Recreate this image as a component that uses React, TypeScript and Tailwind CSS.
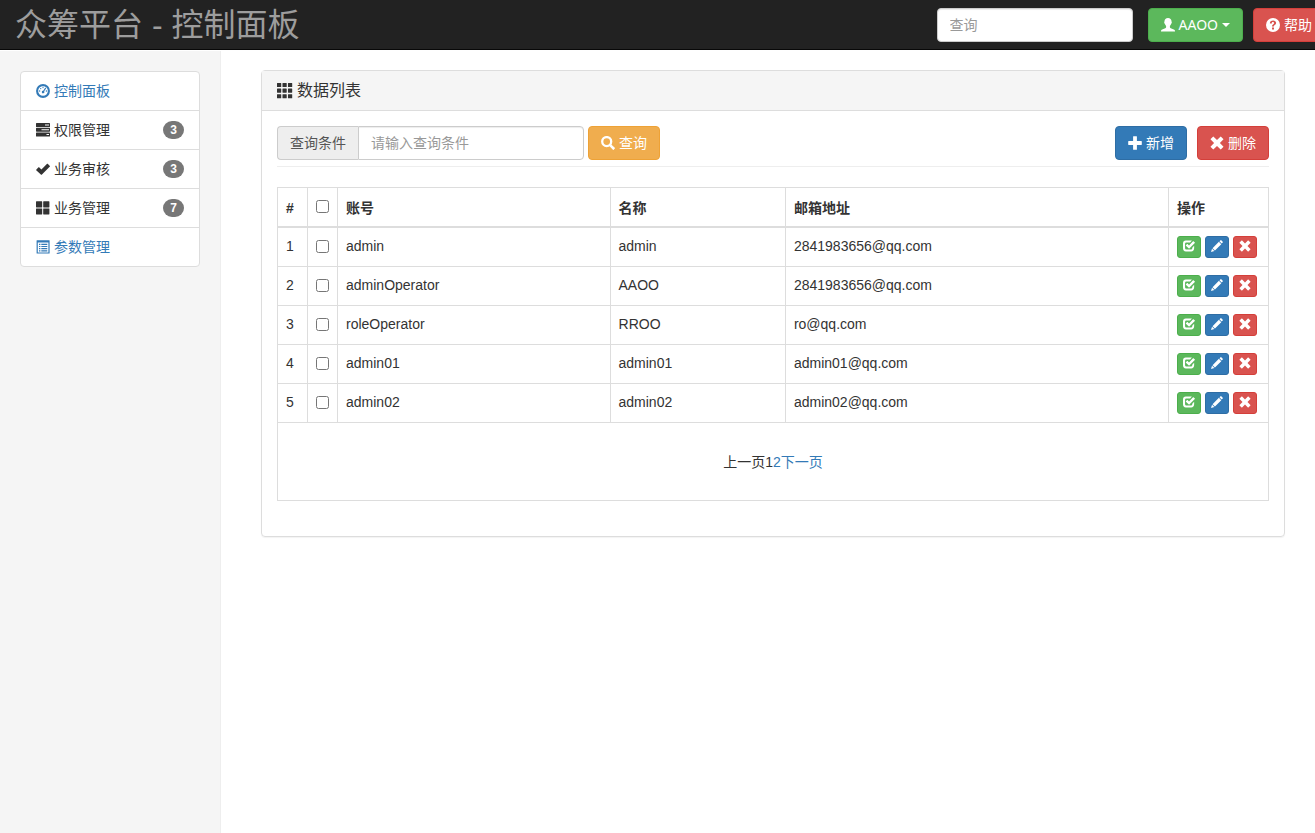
import { useState, type ReactNode } from 'react';
import clsx from 'clsx';

interface User {
  id: number;
  account: string;
  name: string;
  email: string;
}

interface MenuItem {
  label: string;
  icon: ReactNode;
  badge?: number;
}

interface IconProps {
  children: ReactNode;
  className?: string;
}

const users: User[] = [
  { id: 1, account: 'admin', name: 'admin', email: '2841983656@qq.com' },
  { id: 2, account: 'adminOperator', name: 'AAOO', email: '2841983656@qq.com' },
  { id: 3, account: 'roleOperator', name: 'RROO', email: 'ro@qq.com' },
  { id: 4, account: 'admin01', name: 'admin01', email: 'admin01@qq.com' },
  { id: 5, account: 'admin02', name: 'admin02', email: 'admin02@qq.com' },
];

function Icon({ children, className = 'size-3.5' }: IconProps) {
  return (
    <svg
      viewBox="0 0 14 14"
      fill="currentColor"
      aria-hidden="true"
      className={clsx('shrink-0', className)}
    >
      {children}
    </svg>
  );
}

const DashboardIcon = () => (
  <Icon>
    <circle cx="7" cy="7" r="5.9" fill="none" stroke="currentColor" strokeWidth="2.1" />
    <circle cx="3.6" cy="7" r="0.7" />
    <circle cx="4.7" cy="4.6" r="0.7" />
    <circle cx="7" cy="3.6" r="0.7" />
    <circle cx="10.4" cy="7" r="0.7" />
    <path d="M9.3 3.6l.9.6-2 3.1a1.3 1.3 0 1 1-1-.6z" />
  </Icon>
);

const TasksIcon = () => (
  <Icon>
    <path
      fillRule="evenodd"
      d="M.6 0h12.8q.6 0 .6.6v2.800q0 .6-.6.6H.6Q0 4 0 3.400V.6Q0 0 .6 0zM9 1.500v.9h4v-.9zM.6 4.800h12.8q.6 0 .6.6v2.700q0 .6-.6.6H.6Q0 8.700 0 8.100V5.400q0-.6.6-.6zM5.500 6.300v.9H13v-.9zM.6 9.500h12.8q.6 0 .6.6v2.800q0 .6-.6.6H.6q-.6 0-.6-.6v-2.800q0-.6.6-.6zM10.500 11v.9H13V11z"
    />
  </Icon>
);

const OkIcon = () => (
  <Icon>
    <path d="M.2 7.700l2.300-2.400q.3-.3.600 0L5.400 7.500l5.700-5.700q.3-.3.600 0l2.200 2.100q.3.300 0 .6l-8.200 8.200q-.3.300-.6 0L.2 8.300q-.3-.3 0-.6z" />
  </Icon>
);

const ThLargeIcon = () => (
  <Icon>
    <path d="M.4.300h5.400q.4 0 .4.400v5.300q0 .4-.4.400H.4Q0 6.400 0 6V.7Q0 .3.4.3zM7.600.3h5.400q.4 0 .4.4V6q0 .4-.4.4H7.600q-.4 0-.4-.4V.7q0-.4.4-.4zM.4 7.400h5.400q.4 0 .4.4v5.300q0 .4-.4.4H.4q-.4 0-.4-.4V7.800q0-.4.4-.4zM7.600 7.400h5.400q.4 0 .4.4v5.300q0 .4-.4.4H7.600q-.4 0-.4-.4V7.800q0-.4.4-.4z" />
  </Icon>
);

const ListAltIcon = () => (
  <Icon>
    <path
      fillRule="evenodd"
      d="M1 .2h12.200q.4 0 .4.400v12.600q0 .4-.4.4H1q-.4 0-.4-.4V.6Q.6.200 1 .2zM1.800 2.400v10.100h10.600V2.400z"
    />
    <path d="M3 3.700h1.400v1.200H3zM5.300 3.700h6v1.200h-6zM3 5.900h1.400v1.200H3zM5.300 5.900h6v1.200h-6zM3 8.100h1.400v1.200H3zM5.300 8.100h6v1.200h-6zM3 10.300h1.400v1.200H3zM5.300 10.300h6v1.200h-6z" />
  </Icon>
);

const ThIcon = () => (
  <Icon className="size-4">
    <path d="M.3 0h3.100q.3 0 .3.300v3q0 .3-.3.300H.3Q0 3.600 0 3.300v-3Q0 0 .3 0zM5.100 0h3.100q.3 0 .3.300v3q0 .3-.3.3H5.100q-.3 0-.3-.3v-3q0-.3.3-.3zM9.900 0H13q.3 0 .3.300v3q0 .3-.3.3H9.900q-.3 0-.3-.3v-3q0-.3.3-.3zM.3 4.900h3.100q.3 0 .3.300v3q0 .3-.3.3H.3q-.3 0-.3-.3v-3q0-.3.3-.3zM5.100 4.900h3.100q.3 0 .3.300v3q0 .3-.3.3H5.100q-.3 0-.3-.3v-3q0-.3.3-.3zM9.900 4.900H13q.3 0 .3.300v3q0 .3-.3.3H9.900q-.3 0-.3-.3v-3q0-.3.3-.3zM.3 9.800h3.100q.3 0 .3.300v3q0 .3-.3.3H.3q-.3 0-.3-.3v-3q0-.3.3-.3zM5.100 9.800h3.100q.3 0 .3.300v3q0 .3-.3.3H5.100q-.3 0-.3-.3v-3q0-.3.3-.3zM9.900 9.800H13q.3 0 .3.300v3q0 .3-.3.3H9.900q-.3 0-.3-.3v-3q0-.3.3-.3z" />
  </Icon>
);

const UserIcon = () => (
  <Icon>
    <path d="M7 0c2.200 0 3.500 1.300 3.500 3.300 0 .5.300.6.300 1.200 0 .7-.5 1-.7 1.600-.3.900-.7 1.400-1.200 1.900v1.300c0 .5.300.7.800.9l3.100 1.300c.8.400 1.200.8 1.200 1.600v.5H0v-.5c0-.8.400-1.200 1.200-1.600l3.100-1.300c.5-.2.800-.4.800-.9V8c-.5-.5-.9-1-1.200-1.900-.2-.6-.7-.9-.7-1.600 0-.6.300-.7.300-1.200C3.500 1.300 4.800 0 7 0z" />
  </Icon>
);

const QuestionIcon = () => (
  <Icon>
    <path
      fillRule="evenodd"
      d="M7 0a7 7 0 1 1 0 14A7 7 0 0 1 7 0zM3.900 5.400h1.900c0-.9.400-1.300 1.200-1.300.7 0 1.100.3 1.100.9 0 .5-.3.800-.8 1.200-.8.600-1.300 1.100-1.300 2.300h1.900c0-.7.300-1 .9-1.400.8-.6 1.300-1.100 1.300-2.300 0-1.500-1.200-2.400-3-2.400-2 0-3.200 1.100-3.200 3zM6 9.500v1.900h2V9.500z"
    />
  </Icon>
);

const SearchIcon = () => (
  <Icon>
    <circle cx="5.700" cy="5.600" r="4.500" fill="none" stroke="currentColor" strokeWidth="2.300" />
    <path d="M8.300 10l1.700-1.700 3.800 3.500q.4.400 0 .8l-1.100 1.200q-.4.400-.8 0z" />
  </Icon>
);

const PlusIcon = () => (
  <Icon>
    <path d="M5.500.2h3q.4 0 .4.400v4.500h4.500q.4 0 .4.400v3q0 .4-.4.4H8.900v4.500q0 .4-.4.400h-3q-.4 0-.4-.4V8.900H.6q-.4 0-.4-.4v-3q0-.4.4-.4h4.500V.6q0-.4.4-.4z" />
  </Icon>
);

const RemoveIcon = ({ className }: { className?: string }) => (
  <Icon className={className}>
    <path d="M3.600.700L7 4.100 10.400.700q.3-.3.600 0l2.300 2.300q.3.300 0 .6L9.900 7l3.400 3.400q.3.300 0 .6L11 13.300q-.3.300-.6 0L7 9.900l-3.400 3.400q-.3.300-.6 0L.7 11q-.3-.3 0-.6L4.100 7 .7 3.600q-.3-.3 0-.6L3 .7q.3-.3.6 0z" />
  </Icon>
);

const CheckIcon = () => (
  <Icon className="size-3">
    <path d="M3.300.6h7.100L8.300 2.800H3.900q-1.500 0-1.500 1.500v5.300q0 1.500 1.500 1.500h5.400q1.500 0 1.500-1.500V9l2.200-2.200v2.900q0 3.600-3.600 3.600H3.400Q0 13.300 0 9.700V4.100Q0 .6 3.300.6z" />
    <path d="M3.400 6l1.300-1.300q.3-.3.600 0l1.700 1.700 4.700-4.900q.3-.3.600 0l1.500 1.500q.3.300 0 .6L7.400 9.900q-.3.300-.6 0L3.400 6.600q-.3-.3 0-.6z" />
  </Icon>
);

const PencilIcon = () => (
  <Icon className="size-3">
    <path d="M11.200.3q.4-.4.800 0l1.700 1.700q.4.400 0 .8l-1.300 1.300-2.500-2.500zM9.200 2.100l2.800 2.800-7.400 7.400-2.800-2.800zM1.200 10.100l2.800 2.800L0 14z" />
  </Icon>
);

const menu: MenuItem[] = [
  { label: '控制面板', icon: <DashboardIcon /> },
  { label: '权限管理', icon: <TasksIcon />, badge: 3 },
  { label: '业务审核', icon: <OkIcon />, badge: 3 },
  { label: '业务管理', icon: <ThLargeIcon />, badge: 7 },
  { label: '参数管理', icon: <ListAltIcon /> },
];

const btn = 'flex h-[34px] shrink-0 items-center gap-1 rounded-sm border px-3 text-white';
const btnXs = 'flex h-[22px] w-6 items-center justify-center rounded-[3px] border pb-0.5 text-white';
const success = 'border-[#4cae4c] bg-[#5cb85c]';
const danger = 'border-[#d43f3a] bg-[#d9534f]';
const primary = 'border-[#2e6da4] bg-[#337ab7]';
const warning = 'border-[#eea236] bg-[#f0ad4e]';
const field =
  'h-[34px] border border-[#ccc] bg-white px-3 text-[#555] shadow-[inset_0_1px_1px_rgba(0,0,0,0.075)] placeholder:text-[#999]';
const cell = 'border border-[#ddd] p-2 text-left align-top';
const headCell = 'border border-b-2 border-[#ddd] px-2 pt-2.5 pb-2 text-left align-top';

function Navbar() {
  return (
    <header className="h-[51px] overflow-hidden border-b border-white bg-[#222]">
      {/* the button row runs a little past the right edge */}
      <div className="-mr-2.5 flex h-[50px] items-center justify-between border-b border-[#080808] pl-[15px]">
        <a href="#" className="text-[32px] leading-[50px] whitespace-nowrap text-[#9d9d9d]">
          众筹平台 - 控制面板
        </a>
        <div className="flex items-center">
          <input
            type="text"
            aria-label="查询"
            placeholder="查询"
            className={clsx(field, 'mr-[15px] w-[196px] rounded-sm')}
          />
          <button
            type="button"
            className={clsx(btn, success, "mr-2.5 font-['Noto_Sans','Noto_Sans_CJK_SC',sans-serif]")}
          >
            <UserIcon />
            <span>AAOO</span>
            <span className="border-x-4 border-t-4 border-x-transparent border-t-white" />
          </button>
          <button type="button" className={clsx(btn, danger)}>
            <QuestionIcon />
            帮助
          </button>
        </div>
      </div>
    </header>
  );
}

function Sidebar() {
  return (
    <nav className="w-[221px] shrink-0 border-r border-[#eee] bg-[#f5f5f5] p-5">
      <ul className="divide-y divide-[#ddd] rounded-sm border border-[#ddd] bg-white">
        {menu.map((item) => (
          <li key={item.label}>
            {item.badge ? (
              <button type="button" className="flex h-[38px] w-full items-center gap-1 px-[15px]">
                {item.icon}
                {item.label}
                <span className="ml-auto rounded-[10px] bg-[#777] px-[7px] py-[3px] text-xs leading-3 font-bold text-white">
                  {item.badge}
                </span>
              </button>
            ) : (
              <a href="#" className="flex h-[38px] items-center gap-1 px-[15px] text-[#337ab7]">
                {item.icon}
                {item.label}
              </a>
            )}
          </li>
        ))}
      </ul>
    </nav>
  );
}

function UserTable() {
  const [selected, setSelected] = useState<number[]>([]);
  const allSelected = selected.length === users.length;

  function toggle(id: number) {
    setSelected((prev) => (prev.includes(id) ? prev.filter((x) => x !== id) : [...prev, id]));
  }

  return (
    <table className="mb-5 w-full table-fixed border-collapse border border-[#ddd]">
      <colgroup>
        <col className="w-[30px]" />
        <col className="w-[30px]" />
        <col className="w-[27.5%]" />
        <col className="w-[17.7%]" />
        <col />
        <col className="w-[100px]" />
      </colgroup>
      <thead>
        <tr className="h-[39px]">
          <th className={headCell}>#</th>
          <th className={headCell}>
            <input
              type="checkbox"
              aria-label="全选"
              checked={allSelected}
              onChange={() => setSelected(allSelected ? [] : users.map((u) => u.id))}
              className="mt-0.5 block size-[13px]"
            />
          </th>
          <th className={headCell}>账号</th>
          <th className={headCell}>名称</th>
          <th className={headCell}>邮箱地址</th>
          <th className={headCell}>操作</th>
        </tr>
      </thead>
      <tbody>
        {users.map((user) => (
          <tr key={user.id}>
            <td className={cell}>{user.id}</td>
            <td className={cell}>
              <input
                type="checkbox"
                aria-label={user.account}
                checked={selected.includes(user.id)}
                onChange={() => toggle(user.id)}
                className="mt-1 block size-[13px]"
              />
            </td>
            <td className={cell}>{user.account}</td>
            <td className={cell}>{user.name}</td>
            <td className={cell}>{user.email}</td>
            <td className={cell}>
              <div className="flex gap-1">
                <button type="button" aria-label="分配" className={clsx(btnXs, success)}>
                  <CheckIcon />
                </button>
                <button type="button" aria-label="修改" className={clsx(btnXs, primary)}>
                  <PencilIcon />
                </button>
                <button type="button" aria-label="删除" className={clsx(btnXs, danger)}>
                  <RemoveIcon className="size-3" />
                </button>
              </div>
            </td>
          </tr>
        ))}
      </tbody>
      <tfoot>
        <tr className="h-[78px]">
          <td colSpan={6} className="border border-[#ddd]">
            <div className="flex justify-center">
              <span>上一页</span>
              <span>1</span>
              <a href="#" className="text-[#337ab7]">2</a>
              <a href="#" className="text-[#337ab7]">下一页</a>
            </div>
          </td>
        </tr>
      </tfoot>
    </table>
  );
}

export default function App() {
  return (
    <div className="flex min-h-screen flex-col bg-white font-['Liberation_Sans','Noto_Sans_CJK_SC',sans-serif] text-sm leading-5 text-[#333]">
      <Navbar />
      <div className="flex flex-1">
        <Sidebar />
        <main className="min-w-0 flex-1 pt-[19px] pr-[30px] pl-10">
          <section className="rounded-sm border border-[#ddd] shadow-[0_1px_1px_rgba(0,0,0,0.05)]">
            <h3 className="flex h-10 items-center gap-1 border-b border-[#ddd] bg-[#f5f5f5] px-[15px] text-base">
              <ThIcon />
              数据列表
            </h3>
            <div className="p-[15px]">
              <div className="mb-5 flex items-center border-b border-[#eee] pb-1.5">
                <label
                  htmlFor="keyword"
                  className="flex h-[34px] items-center rounded-l-sm border border-r-0 border-[#ccc] bg-[#eee] px-3 text-[#555]"
                >
                  查询条件
                </label>
                <input
                  id="keyword"
                  type="text"
                  placeholder="请输入查询条件"
                  className={clsx(field, 'mr-1 w-[226px] rounded-r-sm')}
                />
                <button type="button" className={clsx(btn, warning)}>
                  <SearchIcon />
                  查询
                </button>
                <button type="button" className={clsx(btn, primary, 'mr-2.5 ml-auto')}>
                  <PlusIcon />
                  新增
                </button>
                <button type="button" className={clsx(btn, danger)}>
                  <RemoveIcon />
                  删除
                </button>
              </div>
              <UserTable />
            </div>
          </section>
        </main>
      </div>
    </div>
  );
}
